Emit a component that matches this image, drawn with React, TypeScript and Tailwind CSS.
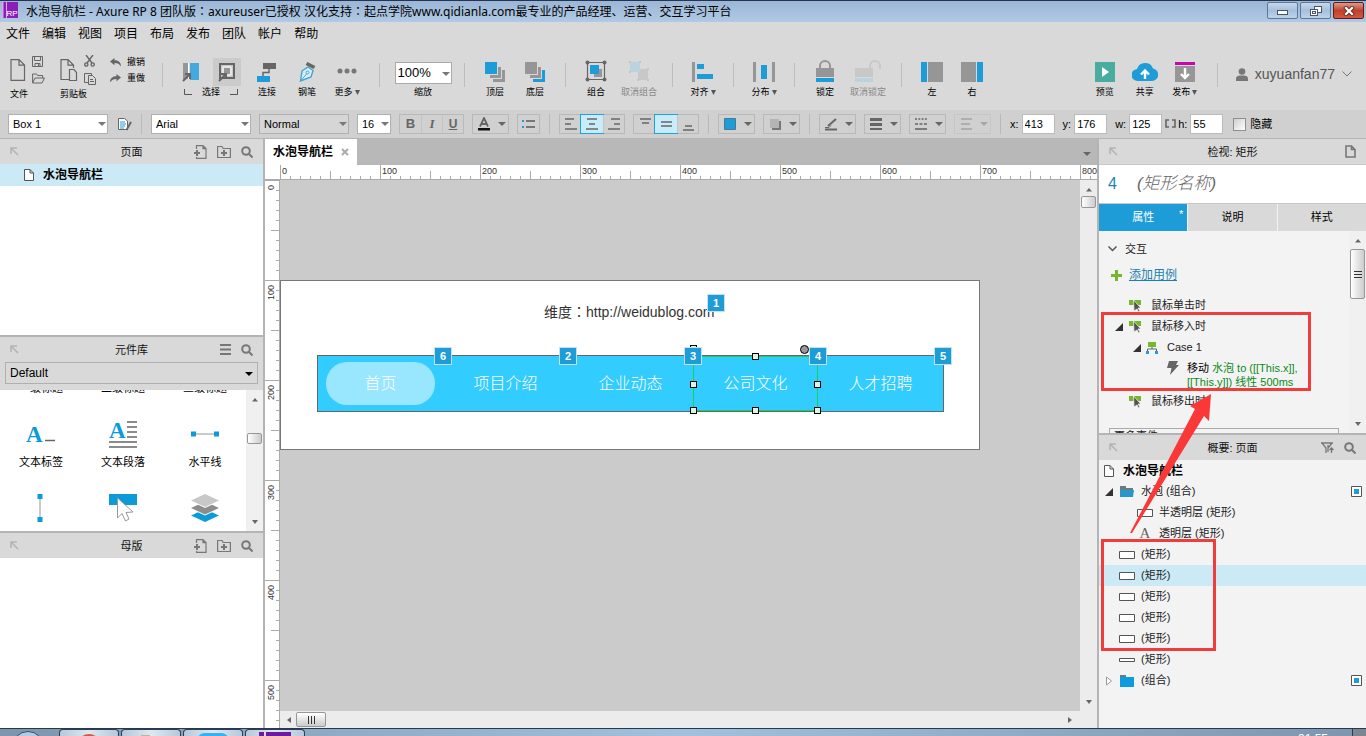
import { useState } from 'react';
import type { ReactNode } from 'react';
import clsx from 'clsx';

const FONT = 'font-["Liberation_Sans","Noto_Sans_CJK_SC",sans-serif]';

const menus = ['文件', '编辑', '视图', '项目', '布局', '发布', '团队', '帐户', '帮助'];

const BLUE = '#1e9cd7';
const GRAY = '#969696';
const DARK = '#666666';

/* ---------- shared icons ---------- */

function Caret({ className = 'text-[#666]' }: { className?: string }) {
  return (
    <svg viewBox="0 0 8 4" className={clsx('h-1 w-2 shrink-0', className)}>
      <path d="M0 0h8L4 4z" fill="currentColor" />
    </svg>
  );
}

function PageIcon({ className }: { className?: string }) {
  return (
    <svg viewBox="0 0 10 12" className={clsx('h-3 w-2.5 shrink-0', className)}>
      <path d="M.5.5h5.500l3.500 3.500v7.500h-9zM6 .5v3.500h3.500" fill="#fff" stroke="#555" />
    </svg>
  );
}

function CollapseIcon() {
  return (
    <svg viewBox="0 0 9 9" className="h-[9px] w-[9px]" fill="none" stroke="#b4b4b4" strokeWidth="1.6">
      <path d="M1 7V1h6M1 1l7 7" />
    </svg>
  );
}

function AddPageIcon() {
  return (
    <svg viewBox="0 0 14 14" className="h-3.5 w-3.5" fill="none" stroke="#777">
      <path d="M3.500 4V.6h6.500l3 3v9.800h-9.500V12M10 .6v3h3" strokeWidth="1.200" />
      <path d="M4 5v6M1 8h6" strokeWidth="2" />
    </svg>
  );
}

function AddFolderIcon() {
  return (
    <svg viewBox="0 0 14 14" className="h-3.5 w-3.5" fill="none" stroke="#777">
      <path d="M.6 12.500v-11h4.500l1 2h7.300v9z" strokeWidth="1.200" />
      <path d="M7 5v6M4 8h6" strokeWidth="2" />
    </svg>
  );
}

function SearchIcon() {
  return (
    <svg viewBox="0 0 12 12" className="h-3 w-3" fill="none" stroke="#777" strokeWidth="2">
      <circle cx="5" cy="5" r="3.800" />
      <path d="M8 8l3.500 3.500" />
    </svg>
  );
}

function MenuIcon() {
  return (
    <svg viewBox="0 0 11 11" className="h-[11px] w-[11px]" stroke="#777" strokeWidth="2">
      <path d="M0 1h11M0 5.500h11M0 10h11" />
    </svg>
  );
}

function FilterIcon() {
  return (
    <svg viewBox="0 0 13 12" className="h-3 w-[13px]" fill="none" stroke="#777" strokeWidth="1.300">
      <path d="M0 1h12M1 1l4 5v5M11 1L7.500 5.500M7 3v7" />
      <path d="M10.500 11V6M8.500 8l2-2 2 2" />
    </svg>
  );
}

/* ---------- title bar ---------- */

function TitleBar() {
  return (
    <header className="flex h-[22px] shrink-0 items-start border-t border-[#26344f] bg-gradient-to-b from-[#9bb6d6] to-[#b0c9e4] text-black">
      <svg viewBox="0 0 16 16" className="ml-0.5 mt-px h-4 w-4">
        <rect width="16" height="16" fill="#8a1fb8" />
        <path d="M0 0h1.500v16H0zM4 0h1v16H4z" fill="#d9a6ee" />
        <text x="4.500" y="14" fontSize="8" fill="#fff" fontFamily="Liberation Sans">RP</text>
      </svg>
      <h1 className={'ml-2 flex-1 text-xs leading-5 font-["Noto_Sans","Noto_Sans_CJK_SC",sans-serif]'}>
        水泡导航栏 - Axure RP 8 团队版<Colon />axureuser已授权 汉化支持<Colon />起点学院www.qidianla.com最专业的产品经理、运营、交互学习平台
      </h1>
      <div className="mr-0.5 mt-px flex gap-0.5">
        <button aria-label="最小化" className="flex h-[17px] w-[31px] items-center justify-center rounded-xs border border-[#5d7796] bg-gradient-to-b from-[#c6d8ec] via-[#a5bfdc] to-[#bdd3ea]">
          <svg viewBox="0 0 12 6" className="mt-1 h-1.5 w-3">
            <rect x=".5" y=".5" width="10" height="4" fill="#fff" stroke="#47566b" />
          </svg>
        </button>
        <button aria-label="还原" className="flex h-[17px] w-[31px] items-center justify-center rounded-xs border border-[#5d7796] bg-gradient-to-b from-[#c6d8ec] via-[#a5bfdc] to-[#bdd3ea]">
          <svg viewBox="0 0 12 12" className="h-3 w-3" fill="#fff" stroke="#47566b">
            <rect x="4.500" y="1.500" width="7" height="6" />
            <rect x=".5" y="4.500" width="7" height="6" />
            <rect x="2.500" y="6.500" width="3" height="2" />
          </svg>
        </button>
        <button aria-label="关闭" className="flex h-[17px] w-[31px] items-center justify-center rounded-xs border border-[#5b1f1b] bg-gradient-to-b from-[#dc9a8c] via-[#c23f2a] to-[#d4583e]">
          <svg viewBox="0 0 12 10" className="h-2.5 w-3" strokeLinecap="square">
            <path d="M3 2l6 6M9 2L3 8" stroke="#57302c" strokeWidth="4" />
            <path d="M3 2l6 6M9 2L3 8" stroke="#fff" strokeWidth="2.200" />
          </svg>
        </button>
      </div>
    </header>
  );
}

function Colon() {
  return <span className={'font-["Noto_Sans_CJK_TC",sans-serif]'}>：</span>;
}

/* ---------- main toolbar ---------- */

function Sep({ wide }: { wide?: boolean }) {
  return <div className={clsx('mb-1.5 h-6 w-px shrink-0 bg-[#bdbdbd]', wide ? 'mx-3' : 'mx-2.5')} />;
}

interface ToolProps {
  label: string;
  children: ReactNode;
  menu?: boolean;
  disabled?: boolean;
}

function Tool({ label, children, menu, disabled }: ToolProps) {
  return (
    <button
      disabled={disabled}
      className={clsx('flex shrink-0 flex-col items-center gap-1', disabled ? 'w-[46px] text-[#888]' : 'w-10 text-black')}
    >
      <span className="flex h-6 items-end">{children}</span>
      <span className="flex items-center gap-0.5 whitespace-nowrap text-[9px] leading-3">
        {label}
        {menu && (
          <svg viewBox="0 0 5 5" className="h-[5px] w-[5px]"><path d="M0 0h5L2.500 5z" fill="#555" /></svg>
        )}
      </span>
    </button>
  );
}

function Toolbar() {
  return (
    <div className="flex h-16 shrink-0 items-center bg-[#d9d9d9]">
      <div className="ml-2 flex w-[42px] flex-col gap-1">
        <div className="flex h-7 items-center gap-1.5">
          <button aria-label="新建文件">
            <svg viewBox="0 0 18 22" className="h-[22px] w-[18px]" fill="none" stroke={DARK} strokeWidth="1.200">
              <path d="M3 .6h8l5.500 5.500v15.300H3zM11 .6v5.500h5.500" />
            </svg>
          </button>
          <div className="flex flex-col gap-1.5">
            <button aria-label="保存">
              <svg viewBox="0 0 11 11" className="h-[11px] w-[11px]" fill="none" stroke={DARK}>
                <path d="M.5.5h10v10H.5zM2.500.5v4h6v-4M3 10.500v-3h5v3M6.500 8v2" />
              </svg>
            </button>
            <button aria-label="打开">
              <svg viewBox="0 0 13 11" className="h-[11px] w-[13px]" fill="none" stroke={DARK}>
                <path d="M.6 10V1h4l1 1.500h5V5M.6 10L3 5h9.500L10 10z" />
              </svg>
            </button>
          </div>
        </div>
        <span className="pl-0.5 text-[9px] leading-3">文件</span>
      </div>
      <div className="ml-2 flex w-11 flex-col gap-1">
        <div className="flex h-7 items-center gap-1.5">
          <button aria-label="粘贴">
            <svg viewBox="0 0 20 22" className="h-[22px] w-5" fill="none" stroke={DARK} strokeWidth="1.200">
              <path d="M11 20.500H3V.6h7l5.500 5.500V9M10 .6v5.500h5.500" />
              <path d="M11.500 10.500h4.500l2.500 3v8h-7z" />
            </svg>
          </button>
          <div className="flex flex-col gap-1.5">
            <button aria-label="剪切">
              <svg viewBox="0 0 11 12" className="h-3 w-[11px]" fill="none" stroke={DARK} strokeWidth="1.400">
                <path d="M2 0l6 8M9 0L3 8" />
                <circle cx="2.300" cy="9.500" r="1.600" />
                <circle cx="8.700" cy="9.500" r="1.600" />
              </svg>
            </button>
            <button aria-label="复制">
              <svg viewBox="0 0 12 12" className="h-3 w-3" fill="none" stroke={DARK}>
                <path d="M4.500 9.500h-4v-9h7v2M4.500 2.500h4l3 3v6h-7zM6 6.500h3M6 8.500h4" />
              </svg>
            </button>
          </div>
        </div>
        <span className="pl-0.5 text-[9px] leading-3">剪贴板</span>
      </div>
      <div className="mb-4 ml-2 flex w-[42px] flex-col gap-1">
        <button className="flex items-center gap-1.5 text-[9px] leading-3">
          <svg viewBox="0 0 11 9" className="h-[9px] w-[11px]"><path d="M0 3.500L4.500 0v2.300C8 2.300 11 4 11 8.500 9.500 6 7.500 5 4.500 5v2.300z" fill={DARK} /></svg>
          撤销
        </button>
        <button className="flex items-center gap-1.5 text-[9px] leading-3">
          <svg viewBox="0 0 11 9" className="h-[9px] w-[11px]"><path d="M11 3.500L6.500 0v2.300C3 2.300 0 4 0 8.500 1.500 6 3.500 5 6.500 5v2.300z" fill={DARK} /></svg>
          重做
        </button>
      </div>
      <Sep />
      <div className="ml-2 flex w-[60px] flex-col items-center">
        <div className="flex w-full justify-between">
          <button aria-label="相交选中">
            <svg viewBox="0 0 20 24" className="h-6 w-5">
              <path d="M2 3h6v16H2z" fill={GRAY} />
              <path d="M9 3h9v17H9z" fill="#44aadb" />
              <path d="M7 3h1v16H7z" fill="#fff" />
              <path d="M2 21l6-6M4 14h5v5" stroke={DARK} strokeWidth="2" fill="none" />
            </svg>
          </button>
          <button aria-label="包含选中" className="flex h-7 w-7 items-center justify-center bg-[#cbcbcb]">
            <svg viewBox="0 0 18 20" className="h-5 w-[18px]">
              <path d="M2 2h14v14H2z" fill="none" stroke={DARK} strokeWidth="2" />
              <path d="M5 5h8v8H5z" fill="none" stroke="#fff" strokeWidth="1" />
              <path d="M6 6h6v6H6z" fill={GRAY} />
              <path d="M1 19l6-6M3 12h5v5" stroke={DARK} strokeWidth="2" fill="none" />
            </svg>
          </button>
        </div>
        <div className="flex items-center gap-2.5 text-[9px] leading-3">
          <svg viewBox="0 0 8 6" className="h-1.5 w-2"><path d="M.5 0v5.500H8" fill="none" stroke="#555" /></svg>
          选择
          <svg viewBox="0 0 8 6" className="h-1.5 w-2"><path d="M7.500 0v5.500H0" fill="none" stroke="#555" /></svg>
        </div>
      </div>
      <div className="ml-1.5 flex items-center">
        <Tool label="连接">
          <svg viewBox="0 0 20 20" className="h-5 w-5">
            <path d="M6 1h13v6H6z" fill={DARK} />
            <path d="M0 14h13v6H0z" fill={BLUE} />
            <path d="M12 7v3.500H6V14" fill="none" stroke={DARK} strokeWidth="1.500" />
          </svg>
        </Tool>
        <Tool label="钢笔">
          <svg viewBox="0 0 18 20" className="h-5 w-[18px]">
            <path d="M2.500 19L4 9l6-4 5 3.500L13 15z" fill="#d9eef8" stroke="#44a5d3" strokeWidth="1.400" />
            <path d="M3 18.500l5.500-6.500" stroke="#44a5d3" />
            <circle cx="9.500" cy="10.500" r="1.500" fill="none" stroke="#44a5d3" />
            <path d="M8.500 1.500l8 4" stroke={DARK} strokeWidth="3.500" />
          </svg>
        </Tool>
        <Tool label="更多" menu>
          <svg viewBox="0 0 20 20" className="h-5 w-5" fill="#777">
            <circle cx="3" cy="9" r="2.500" />
            <circle cx="10" cy="9" r="2.500" />
            <circle cx="17" cy="9" r="2.500" />
          </svg>
        </Tool>
        <Sep wide />
        <div className="flex w-[62px] flex-col items-center gap-0.5">
          <div className="relative mt-1 flex w-[57px]">
            <select id="zoom" className="h-[22px] w-full appearance-none border border-[#aaa] bg-white pl-0.5 text-[13px] text-black">
              <option>100%</option>
            </select>
            <Caret className="pointer-events-none absolute right-0.5 top-2.5 text-[#777]" />
          </div>
          <label htmlFor="zoom" className="text-[9px] leading-3">缩放</label>
        </div>
        <Sep />
        <Tool label="顶层">
          <svg viewBox="0 0 20 20" className="h-5 w-5">
            <path d="M8 8h12v12H8z" fill={GRAY} />
            <path d="M4 4h13v13H4z" fill="#d9d9d9" />
            <path d="M5 5h11v11H5z" fill={GRAY} />
            <path d="M0 0h13v13H0z" fill="#d9d9d9" />
            <path d="M0 0h12v12H0z" fill={BLUE} />
          </svg>
        </Tool>
        <Tool label="底层">
          <svg viewBox="0 0 20 20" className="h-5 w-5">
            <path d="M8 8h12v12H8z" fill={BLUE} />
            <path d="M4 4h13v13H4z" fill="#d9d9d9" />
            <path d="M5 5h11v11H5z" fill={GRAY} />
            <path d="M0 0h13v13H0z" fill="#d9d9d9" />
            <path d="M0 0h12v12H0z" fill={GRAY} />
          </svg>
        </Tool>
        <Sep />
        <Tool label="组合">
          <svg viewBox="0 0 22 22" className="h-[22px] w-[22px]">
            <path d="M2.500 2.500h17v17h-17z" fill="none" stroke={DARK} strokeWidth="1.200" />
            <path d="M9 9h8v8H9z" fill={GRAY} />
            <path d="M5 5h9v9H5z" fill={BLUE} />
            <circle cx="2.500" cy="2.500" r="2" fill={DARK} />
            <circle cx="19.500" cy="2.500" r="2" fill={DARK} />
            <circle cx="2.500" cy="19.500" r="2" fill={DARK} />
            <circle cx="19.500" cy="19.500" r="2" fill={DARK} />
          </svg>
        </Tool>
        <Tool label="取消组合" disabled>
          <svg viewBox="0 0 22 22" className="h-[22px] w-[22px]">
            <path d="M10 9h10v11H10z" fill="#c8c8c8" />
            <path d="M2 2h10v10H2z" fill="#bcd3de" />
            <path d="M1 1h2v2H1zM11 1h2v2h-2zM1 11h2v2H1zM19 8h2v2h-2zM19 19h2v2h-2zM9 19h2v2H9z" fill="#c4c4c4" />
          </svg>
        </Tool>
        <Sep />
        <Tool label="对齐" menu>
          <svg viewBox="0 0 22 20" className="h-5 w-[22px]">
            <path d="M0 0h3v20H0z" fill={GRAY} />
            <path d="M5 2h7v5H5zM5 12h16v5H5z" fill={BLUE} />
          </svg>
        </Tool>
        <Sep />
        <Tool label="分布" menu>
          <svg viewBox="0 0 22 20" className="h-5 w-[22px]">
            <path d="M0 0h3v20H0zM19 0h3v20h-3z" fill={GRAY} />
            <path d="M8 3h6v14H8z" fill={BLUE} />
          </svg>
        </Tool>
        <Sep />
        <Tool label="锁定">
          <svg viewBox="0 0 18 22" className="h-[22px] w-[18px]">
            <path d="M4 9V6a5 5 0 0 1 10 0v3" fill="none" stroke={GRAY} strokeWidth="2" />
            <path d="M0 8h18v9H0z" fill={GRAY} />
            <path d="M0 18h18v4H0z" fill={BLUE} />
          </svg>
        </Tool>
        <Tool label="取消锁定" disabled>
          <svg viewBox="0 0 26 22" className="h-[22px] w-[26px]">
            <path d="M15 9V6a5 5 0 0 1 10 0v3" fill="none" stroke="#c8c8c8" strokeWidth="2" />
            <path d="M0 8h18v9H0z" fill="#c8c8c8" />
            <path d="M0 18h18v4H0z" fill="#bcd3de" />
          </svg>
        </Tool>
        <Sep />
        <Tool label="左">
          <svg viewBox="0 0 22 20" className="h-5 w-[22px]">
            <path d="M0 0h6v20H0z" fill={BLUE} />
            <path d="M7 0h15v20H7z" fill={GRAY} />
          </svg>
        </Tool>
        <Tool label="右">
          <svg viewBox="0 0 22 20" className="h-5 w-[22px]">
            <path d="M16 0h6v20h-6z" fill={BLUE} />
            <path d="M0 0h15v20H0z" fill={GRAY} />
          </svg>
        </Tool>
      </div>
      <div className="ml-auto flex items-center">
        <Tool label="预览">
          <svg viewBox="0 0 20 20" className="h-5 w-5">
            <path d="M0 0h20v20H0z" fill="#48ac9e" />
            <path d="M7 5l7 5-7 5z" fill="#fff" />
          </svg>
        </Tool>
        <Tool label="共享">
          <svg viewBox="0 0 26 20" className="h-5 w-[26px]">
            <path d="M6 19a6 6 0 0 1-1-12A8.500 8.500 0 0 1 21 6.500 6.300 6.300 0 0 1 20 19z" fill={BLUE} />
            <path d="M13 17V9M9 12.500l4-4 4 4" fill="none" stroke="#fff" strokeWidth="2.400" />
          </svg>
        </Tool>
        <Tool label="发布" menu>
          <svg viewBox="0 0 20 20" className="h-5 w-5">
            <path d="M0 0h20v3H0z" fill="#c30aa8" />
            <path d="M0 4h20v16H0z" fill={GRAY} />
            <path d="M10 6v9M6 12l4 4 4-4" fill="none" stroke="#fff" strokeWidth="2.400" />
          </svg>
        </Tool>
        <Sep wide />
        <button className="mb-2 mr-3.5 flex h-[30px] items-center gap-[7px] pl-1.5 text-sm text-[#555]">
          <svg viewBox="0 0 12 13" className="h-[13px] w-3" fill="#777">
            <circle cx="6" cy="3.500" r="3.300" />
            <path d="M0 13v-2.500C0 8.500 2 7.500 4 7.500h4c2 0 4 1 4 3V13z" />
          </svg>
          xuyuanfan77
          <svg viewBox="0 0 10 6" className="h-1.5 w-2.5" fill="none" stroke="#777"><path d="M.5.5L5 5 9.500.5" /></svg>
        </button>
      </div>
    </div>
  );
}

/* ---------- style bar ---------- */

interface BarSelectProps {
  label: string;
  value: string;
  className: string;
}

function BarSelect({ label, value, className }: BarSelectProps) {
  return (
    <div className={clsx('relative flex shrink-0', className)}>
      <select aria-label={label} className="h-5 w-full appearance-none border border-[#b0b0b0] bg-inherit pl-1 text-[11px] text-black">
        <option>{value}</option>
      </select>
      <Caret className="pointer-events-none absolute right-0.5 top-2 text-[#777]" />
    </div>
  );
}

function ButtonGroup({ items, active = -1 }: { items: { name: string; icon: ReactNode }[]; active?: number }) {
  return (
    <div className="flex shrink-0 border border-[#b9b9b9]">
      {items.map((it, i) => (
        <button
          key={it.name}
          aria-label={it.name}
          className={clsx(
            'flex h-[18px] items-center justify-center text-[#666]',
            i === active ? 'w-[22px] bg-[#c9ecfa] outline outline-[#22a0da]' : 'w-[21px]',
            i > 0 && i !== active && 'border-l border-[#c4c4c4]'
          )}
        >
          {it.icon}
        </button>
      ))}
    </div>
  );
}

function DropButton({ name, children, disabled }: { name: string; children: ReactNode; disabled?: boolean }) {
  return (
    <button
      aria-label={name}
      disabled={disabled}
      className="flex h-5 w-[37px] shrink-0 items-center justify-between border border-[#b9b9b9] pl-1 pr-0.5 disabled:opacity-40"
    >
      {children}
      <Caret />
    </button>
  );
}

function Lines({ d }: { d: string }) {
  return (
    <svg viewBox="0 0 14 14" className="h-3.5 w-3.5" fill="none" stroke="#666" strokeWidth="1.600">
      <path d={d} />
    </svg>
  );
}

function BarSep() {
  return <div className="mx-px h-5 w-px shrink-0 bg-[#b9b9b9]" />;
}

function NumberField({ label, value }: { label: string; value: string }) {
  return (
    <label className="flex shrink-0 items-center gap-[3px] text-[11px] text-black">
      {label}
      <input defaultValue={value} className="h-5 w-[33px] border border-[#bbb] bg-white pl-0.5 text-[11px]" />
    </label>
  );
}

function StyleBar() {
  return (
    <div className="flex h-[29px] shrink-0 items-center gap-2 border-b border-[#b4b4b4] bg-[#d0d0d0] pl-2">
      <BarSelect label="控件样式" value="Box 1" className="w-[100px] bg-white" />
      <button aria-label="样式管理" className="w-4 shrink-0">
        <svg viewBox="0 0 16 14" className="h-3.5 w-4" fill="none">
          <path d="M2.500 1.500h6l3 2.500v8.500h-9z" fill="#fff" stroke={DARK} />
          <path d="M4 5h5M4 7h6M4 9h5M4 11h4" stroke={BLUE} />
          <path d="M15 5l-4.500 8" stroke={DARK} strokeWidth="2" />
        </svg>
      </button>
      <BarSep />
      <BarSelect label="字体" value="Arial" className="w-[100px] bg-white" />
      <BarSelect label="字形" value="Normal" className="w-[90px] bg-[#d6d6d6]" />
      <BarSelect label="字号" value="16" className="w-[34px] bg-white" />
      <ButtonGroup
        items={[
          { name: '加粗', icon: <span className="text-[13px] font-bold leading-4">B</span> },
          { name: '斜体', icon: <span className={'text-[13px] font-bold italic leading-4 font-["Liberation_Serif",serif]'}>I</span> },
          { name: '下划线', icon: <span className="text-xs font-bold leading-4 underline">U</span> },
        ]}
      />
      <DropButton name="文字颜色">
        <svg viewBox="0 0 14 14" className="h-3.5 w-3.5">
          <path d="M3 9.500L7 1l4 8.500M4.500 7h5" fill="none" stroke={DARK} strokeWidth="1.800" />
          <path d="M1 11h12v2.500H1z" fill="#111" />
        </svg>
      </DropButton>
      <ButtonGroup
        items={[{
          name: '项目符号',
          icon: (
            <svg viewBox="0 0 14 10" className="h-2.5 w-3.5">
              <path d="M0 1h2v2H0zM0 7h2v2H0z" fill={BLUE} />
              <path d="M4 1h9v2H4zM4 7h9v2H4z" fill="#777" />
            </svg>
          ),
        }]}
      />
      <BarSep />
      <ButtonGroup
        active={1}
        items={[
          { name: '左对齐', icon: <Lines d="M1 2h9M1 7h6M1 12h12" /> },
          { name: '居中', icon: <Lines d="M2 2h10M4 7h6M1 12h12" /> },
          { name: '右对齐', icon: <Lines d="M4 2h9M7 7h6M1 12h12" /> },
        ]}
      />
      <ButtonGroup
        active={1}
        items={[
          { name: '顶部对齐', icon: <Lines d="M2 2h11M4 6h7" /> },
          { name: '垂直居中', icon: <Lines d="M2 5h11M2 9h11" /> },
          { name: '底部对齐', icon: <Lines d="M4 9h7M2 13h11" /> },
        ]}
      />
      <BarSep />
      <DropButton name="填充颜色">
        <svg viewBox="0 0 14 14" className="h-3.5 w-3.5"><path d="M1.500 1.500h11v11h-11z" fill={BLUE} stroke="#4a7890" /></svg>
      </DropButton>
      <DropButton name="外部阴影">
        <svg viewBox="0 0 14 14" className="h-3.5 w-3.5">
          <path d="M4 4h9v9H4z" fill="#777" />
          <path d="M2 2h9v9H2z" fill="#b4b4b4" />
        </svg>
      </DropButton>
      <BarSep />
      <DropButton name="线条颜色">
        <svg viewBox="0 0 14 14" className="h-3.5 w-3.5" fill="none" stroke={DARK}>
          <path d="M4 9l8-7" strokeWidth="2" />
          <path d="M1 10.500h4l2-2" />
          <path d="M1 12.500h12" strokeWidth="2" />
        </svg>
      </DropButton>
      <DropButton name="线宽">
        <svg viewBox="0 0 14 14" className="h-3.5 w-3.5" fill={DARK}><path d="M1 1h12v3H1zM1 6h12v3H1zM1 11h12v2H1z" /></svg>
      </DropButton>
      <DropButton name="线型">
        <svg viewBox="0 0 14 14" className="h-3.5 w-3.5" fill="none" stroke={DARK} strokeWidth="1.600">
          <path d="M1 2h12" strokeDasharray="2 1.300" />
          <path d="M1 7h12" strokeDasharray="3 1.500" />
          <path d="M1 12h12" />
        </svg>
      </DropButton>
      <DropButton name="箭头样式" disabled>
        <Lines d="M2 2h11M2 7h9M2 12h11" />
      </DropButton>
      <BarSep />
      <NumberField label="x:" value="413" />
      <NumberField label="y:" value="176" />
      <NumberField label="w:" value="125" />
      <div className="flex items-center">
        <button aria-label="保持宽高比例" className="-ml-1.5 w-3.5">
          <svg viewBox="0 0 14 10" className="h-2.5 w-3.5" fill="none" stroke={DARK} strokeWidth="1.600">
            <path d="M5 1H2v7h3M8 1h3v7H8" />
          </svg>
        </button>
        <NumberField label="h:" value="55" />
      </div>
      <label className="flex shrink-0 items-center gap-1 pl-0.5 text-[11px] text-black">
        <input type="checkbox" className="h-[13px] w-[13px] appearance-none border border-[#8e8f8f] bg-gradient-to-br from-[#cfcfcf] to-white" />
        隐藏
      </label>
    </div>
  );
}

/* ---------- side panels ---------- */

function PanelHeader({ title, children }: { title: string; children?: ReactNode }) {
  return (
    <div className="relative flex h-[25px] shrink-0 items-center justify-between bg-[#d9d9d9] px-2.5">
      <button aria-label="折叠"><CollapseIcon /></button>
      <h2 className="pointer-events-none absolute inset-x-0 text-center text-[11px] leading-4 text-[#111]">{title}</h2>
      <div className="flex items-center gap-2.5">{children}</div>
    </div>
  );
}

function ScrollArrow({ dir }: { dir: 'up' | 'down' | 'left' | 'right' }) {
  const paths = { up: 'M0 5.500h6L3 2z', down: 'M0 1h6L3 5z', left: 'M5 0v6L1 3z', right: 'M1 0v6l4-3z' };
  return (
    <svg viewBox="0 0 6 6" className="h-1.5 w-1.5 shrink-0"><path d={paths[dir]} fill="#666" /></svg>
  );
}

const widgets = [
  {
    label: '文本标签',
    icon: (
      <svg viewBox="0 0 30 28" className="h-7 w-[30px]">
        <text x="0" y="22" fontSize="23" fontWeight="bold" fontFamily="Liberation Serif" fill="#0a9bd8">A</text>
        <path d="M19 20.500h10" stroke={DARK} strokeWidth="1.500" />
      </svg>
    ),
  },
  {
    label: '文本段落',
    icon: (
      <svg viewBox="0 0 28 28" className="h-7 w-7">
        <text x="0" y="18" fontSize="23" fontWeight="bold" fontFamily="Liberation Serif" fill="#0a9bd8">A</text>
        <path d="M18 2h10M18 7h10M18 12h10M18 17h10M0 22h28M0 27h28" stroke={DARK} strokeWidth="1.600" />
      </svg>
    ),
  },
  {
    label: '水平线',
    icon: (
      <svg viewBox="0 0 28 28" className="h-7 w-7">
        <path d="M3 14h22" stroke={GRAY} />
        <path d="M0 11.500h5v5H0zM23 11.500h5v5h-5z" fill="#0a9bd8" />
      </svg>
    ),
  },
];

const moreWidgets = [
  {
    label: '垂直线',
    icon: (
      <svg viewBox="0 0 28 28" className="h-7 w-7">
        <path d="M13 3v22" stroke={GRAY} />
        <path d="M10.500 0h5v5h-5zM10.500 23h5v5h-5z" fill="#0a9bd8" />
      </svg>
    ),
  },
  {
    label: '热区',
    icon: (
      <svg viewBox="0 0 28 28" className="h-7 w-7">
        <path d="M0 0h28v11H0z" fill="#0a9bd8" />
        <path d="M8.500 4l15.500 14-7 .5 3 6.500-3.500 2-3.500-7.500-4.500 4.500z" fill="#fff" stroke="#999" />
      </svg>
    ),
  },
  {
    label: '动态面板',
    icon: (
      <svg viewBox="0 0 28 28" className="h-7 w-7">
        <path d="M0 21.500L14 15l14 6.500L14 28z" fill="#0a9bd8" />
        <path d="M0 15l14-6.500L28 15l-14 6.500z" fill="#fff" />
        <path d="M0 14l14-6.500L28 14l-14 6.500z" fill="#8c8c8c" />
        <path d="M0 7.500L14 1l14 6.500L14 14z" fill="#fff" />
        <path d="M0 6.500L14 0l14 6.500L14 13z" fill="#c8c8c8" />
      </svg>
    ),
  },
];

function LeftColumn() {
  return (
    <aside className="flex w-[265px] shrink-0 flex-col border-r-2 border-[#b4b4b4] bg-white">
      <section className="flex h-[198px] flex-col border-b-2 border-[#b4b4b4]">
        <PanelHeader title="页面">
          <button aria-label="添加页面"><AddPageIcon /></button>
          <button aria-label="添加文件夹"><AddFolderIcon /></button>
          <button aria-label="查找"><SearchIcon /></button>
        </PanelHeader>
        <div className="flex h-[22px] items-center gap-[9px] bg-[#cbeaf6] pl-6 text-xs font-bold text-black">
          <PageIcon />
          水泡导航栏
        </div>
      </section>
      <section className="flex h-[196px] flex-col border-b-2 border-[#b4b4b4]">
        <PanelHeader title="元件库">
          <button aria-label="选项"><MenuIcon /></button>
          <button aria-label="查找"><SearchIcon /></button>
        </PanelHeader>
        <div className="relative h-7 shrink-0 bg-[#d9d9d9] px-[5px]">
          <select aria-label="元件库选择" className="block h-[22px] w-full appearance-none border border-[#b0b0b0] pl-1 text-xs text-black">
            <option>Default</option>
          </select>
          <Caret className="pointer-events-none absolute right-2.5 top-2.5 text-black" />
        </div>
        <div className="flex min-h-0 flex-1">
          <div className="flex flex-1 flex-col overflow-hidden text-[11px] leading-4 text-black">
            <div className="flex h-4 shrink-0 items-end">
              {['一级标题', '二级标题', '三级标题'].map((t) => (
                <span key={t} className="flex h-[26px] w-[82px] shrink-0 justify-center">{t}</span>
              ))}
            </div>
            <div className="grid grid-cols-[82px_82px_82px] pt-3.5">
              {widgets.map((w) => (
                <button key={w.label} className="flex flex-col items-center gap-1.5">
                  {w.icon}
                  <span>{w.label}</span>
                </button>
              ))}
            </div>
            <div className="grid grid-cols-[82px_82px_82px] pt-6">
              {moreWidgets.map((w) => (
                <button key={w.label} aria-label={w.label} className="flex justify-center">{w.icon}</button>
              ))}
            </div>
          </div>
          <div className="flex w-[17px] flex-col items-center justify-between bg-[#f0f0f0] py-1.5">
            <ScrollArrow dir="up" />
            <div className="mb-11 h-[11px] w-[15px] rounded-xs border border-[#979797] bg-gradient-to-r from-white to-[#ccc]" />
            <ScrollArrow dir="down" />
          </div>
        </div>
      </section>
      <section className="flex-1">
        <PanelHeader title="母版">
          <button aria-label="添加母版"><AddPageIcon /></button>
          <button aria-label="添加文件夹"><AddFolderIcon /></button>
          <button aria-label="查找"><SearchIcon /></button>
        </PanelHeader>
      </section>
    </aside>
  );
}

/* ---------- design area ---------- */

const navItems = [
  { label: '首页', badge: 6 },
  { label: '项目介绍', badge: 2 },
  { label: '企业动态', badge: 3 },
  { label: '公司文化', badge: 4 },
  { label: '人才招聘', badge: 5 },
];

function Badge({ children, className }: { children: ReactNode; className: string }) {
  return (
    <span className={clsx('absolute z-20 flex h-[18px] w-[18px] items-center justify-center border border-[#bfe3f4] bg-[#1e9cd7] text-[11px] font-bold leading-none text-white', className)}>
      {children}
    </span>
  );
}

function Handle({ className }: { className: string }) {
  return <span className={clsx('absolute z-10 h-[7px] w-[7px] border border-black bg-[#d9f5e4]', className)} />;
}

function Selection() {
  return (
    <span className="absolute inset-0 z-10 border border-[#14d25c]">
      <Handle className="-left-1 -top-3" />
      <Handle className="-top-1 left-[58px]" />
      <Handle className="-left-1 top-6" />
      <Handle className="-right-1 top-6" />
      <Handle className="-bottom-1 -left-1" />
      <Handle className="-bottom-1 left-[58px]" />
      <Handle className="-bottom-1 -right-1" />
      <span className="absolute -top-3 right-2 h-[9px] w-[9px] rounded-full border border-black bg-[#999]" />
    </span>
  );
}

function HorizontalRuler() {
  return (
    <div className="flex h-[15px] overflow-hidden border-b border-[#aaa] bg-white pl-[15px]">
      {Array.from({ length: 9 }, (_, i) => (
        <div key={i} className="relative w-[100px] shrink-0 border-l border-[#aaa]">
          <svg viewBox="0 0 100 14" className="absolute -left-px top-0 h-3.5 w-[100px]" stroke="#aaa">
            <path d="M10.500 11v3M20.500 11v3M30.500 11v3M40.500 11v3M50.500 6v8M60.500 11v3M70.500 11v3M80.500 11v3M90.500 11v3" />
          </svg>
          <span className="relative block w-4 pl-px text-[9px] leading-3 text-[#333]">{i * 100}</span>
        </div>
      ))}
    </div>
  );
}

function VerticalRuler() {
  return (
    <div className="w-[15px] shrink-0 overflow-hidden border-r border-[#aaa] bg-white">
      {Array.from({ length: 6 }, (_, i) => (
        <div key={i} className="relative h-[100px] border-t border-[#aaa]">
          <svg viewBox="0 0 14 100" className="absolute -top-px left-0 h-[100px] w-3.5" stroke="#aaa">
            <path d="M11 10.500h3M11 20.500h3M11 30.500h3M11 40.500h3M6 50.500h8M11 60.500h3M11 70.500h3M11 80.500h3M11 90.500h3" />
          </svg>
          <span className="relative block rotate-180 pb-1 text-[9px] leading-3 text-[#333] [writing-mode:vertical-rl]">{i * 100}</span>
        </div>
      ))}
    </div>
  );
}

function DesignArea() {
  return (
    <main className="flex min-w-0 flex-1 flex-col bg-[#cbcbcb]">
      <div className="flex h-[26px] shrink-0 items-center justify-between bg-[#b8b8b8] pr-1.5">
        <div className="flex h-full items-center gap-2 bg-white px-2 text-xs font-bold text-black">
          水泡导航栏
          <button aria-label="关闭标签">
            <svg viewBox="0 0 8 8" className="h-2 w-2" stroke="#aaa" strokeWidth="2"><path d="M1 1l6 6M7 1L1 7" /></svg>
          </button>
        </div>
        <button aria-label="标签列表" className="pt-1"><Caret /></button>
      </div>
      <HorizontalRuler />
      <div className="flex min-h-0 flex-1">
        <VerticalRuler />
        <div className="flex min-w-0 flex-1 flex-col">
          <div className="flex min-h-0 flex-1">
            <div className="relative min-w-0 flex-1 overflow-hidden">
              <div className="absolute left-0 top-[100px] h-[170px] w-[700px] border border-[#777] bg-white">
                <p className="absolute left-[263px] top-5 whitespace-nowrap text-sm leading-5 text-[#333]">
                  维度<Colon />http://weidublog.com
                </p>
                <Badge className="left-[426px] top-[13px]">1</Badge>
                <nav className="absolute left-9 top-[74px] flex h-[57px] border border-[#666] bg-[#33ccff] text-base font-light text-white">
                  {navItems.map((n) => (
                    <a key={n.label} href="#" className="relative flex w-[125px] items-center justify-center">
                      {n.badge === 6 && <span className="absolute inset-x-2 inset-y-1.5 rounded-[21px] bg-white/50" />}
                      <span className="relative">{n.label}</span>
                      {n.badge === 4 && <Selection />}
                      <Badge className="-right-[9px] -top-[9px]">{n.badge}</Badge>
                    </a>
                  ))}
                </nav>
              </div>
            </div>
            <div className="flex w-[17px] flex-col items-center justify-between bg-[#ececec] py-1.5">
              <div className="flex flex-col items-center gap-1">
                <ScrollArrow dir="up" />
                <div className="h-3 w-[15px] rounded-xs border border-[#979797] bg-gradient-to-r from-white to-[#ccc]" />
              </div>
              <ScrollArrow dir="down" />
            </div>
          </div>
          <div className="flex h-[17px] shrink-0 items-center bg-[#ececec] pl-1.5 pr-6">
            <ScrollArrow dir="left" />
            <div className="ml-1 flex h-[15px] w-[30px] items-center justify-center gap-0.5 rounded-xs border border-[#979797] bg-gradient-to-b from-white to-[#ccc]">
              <i className="h-2 w-px bg-[#333]" />
              <i className="h-2 w-px bg-[#333]" />
              <i className="h-2 w-px bg-[#333]" />
            </div>
            <span className="flex-1" />
            <ScrollArrow dir="right" />
          </div>
        </div>
      </div>
    </main>
  );
}

/* ---------- inspector ---------- */

function EventIcon() {
  return (
    <svg viewBox="0 0 12 12" className="h-3 w-3 shrink-0">
      <path d="M0 0h12v5H0z" fill="#76b82a" />
      <path d="M4.500 0L12 8H9l2 3-1.500 1L8 9l-3 2z" fill="#555" stroke="#f3f3f3" strokeWidth=".8" />
    </svg>
  );
}

function OpenTriangle({ className }: { className?: string }) {
  return (
    <svg viewBox="0 0 8 8" className={clsx('h-2 w-2 shrink-0', className)}><path d="M8 0v8H0z" fill="#333" /></svg>
  );
}

function RectIcon({ thin }: { thin?: boolean }) {
  return (
    <svg viewBox="0 0 16 8" className="h-2 w-4 shrink-0">
      {thin ? (
        <path d="M.5 2.500h15v3H.5z" fill="#fff" stroke="#555" />
      ) : (
        <path d="M.5.5h15v7H.5z" fill="#fff" stroke="#555" />
      )}
    </svg>
  );
}

function FolderIcon({ open }: { open?: boolean }) {
  return (
    <svg viewBox="0 0 14 12" className="h-3 w-3.5 shrink-0">
      <path d="M0 0h6v2h7v5H0z" fill="#6a7a82" />
      {open ? <path d="M0 11V5l1-1h13l-1 7z" fill="#2a96c8" /> : <path d="M0 2h14v10H0z" fill="#0a9be0" />}
    </svg>
  );
}

function GroupMark() {
  return (
    <svg viewBox="0 0 11 11" className="ml-auto h-[11px] w-[11px] shrink-0">
      <path d="M.5.5h10v10H.5z" fill="#fff" stroke="#555" />
      <path d="M3 3h5v5H3z" fill={BLUE} />
    </svg>
  );
}

function Inspector() {
  const [tab, setTab] = useState('属性');
  return (
    <section className="flex h-[296px] shrink-0 flex-col border-b-2 border-[#b4b4b4]">
      <PanelHeader title="检视: 矩形">
        <button aria-label="页面属性">
          <svg viewBox="0 0 11 13" className="h-[13px] w-[11px]" fill="none" stroke="#777" strokeWidth="1.600">
            <path d="M1 1h5.500L10 4.500V12H1zM6.500 1v3.500H10" />
          </svg>
        </button>
      </PanelHeader>
      <div className="flex h-10 shrink-0 items-center gap-5 border-y border-[#c8c8c8] bg-white pl-[9px]">
        <span className="text-base text-[#1a86b0]">4</span>
        <input aria-label="矩形名称" placeholder="(矩形名称)" className="w-40 text-[17px] italic placeholder:font-light placeholder:text-[#666]" />
      </div>
      <div className="flex h-[27px] shrink-0 gap-px bg-[#f3f3f3]">
        {['属性', '说明', '样式'].map((t) => (
          <button
            key={t}
            onClick={() => setTab(t)}
            className={clsx('relative flex-1 text-[11px]', tab === t ? 'bg-[#1e9cd7] text-white' : 'bg-[#d9d9d9] text-black')}
          >
            {t}
            {t === '属性' && <sup className="absolute right-1 top-2.5 text-[11px]">*</sup>}
          </button>
        ))}
      </div>
      <div className="flex min-h-0 flex-1 bg-[#f3f3f3]">
        <div className="min-w-0 flex-1 overflow-hidden pt-2 text-[11px] leading-[14px] text-[#222]">
          <div className="flex h-5 items-center gap-2 pl-[9px]">
            <svg viewBox="0 0 9 6" className="h-1.5 w-[9px]" fill="none" stroke="#555" strokeWidth="1.500"><path d="M.5.5l4 4 4-4" /></svg>
            交互
          </div>
          <div className="flex h-8 items-center gap-[7px] pl-3">
            <svg viewBox="0 0 11 11" className="h-[11px] w-[11px]" stroke="#76b82a" strokeWidth="3"><path d="M5.500 0v11M0 5.500h11" /></svg>
            <a href="#" className="text-xs text-[#1a80ae] underline">添加用例</a>
          </div>
          <div className="flex h-[21px] items-end gap-2.5 pl-[30px]"><EventIcon />鼠标单击时</div>
          <div className="flex h-[21px] items-end pl-4">
            <OpenTriangle className="mb-0.5" />
            <span className="flex items-end gap-2.5 pl-1.5"><EventIcon />鼠标移入时</span>
          </div>
          <div className="flex h-[21px] items-end gap-[5px] pl-[34px]">
            <OpenTriangle className="mb-0.5" />
            <svg viewBox="0 0 12 12" className="h-3 w-3" fill="none">
              <path d="M2 0h8v5H2z" fill="#76b82a" />
              <path d="M6 5v2M1.500 10V7h9v3" stroke={DARK} />
              <path d="M0 9h3v3H0zM9 9h3v3H9z" fill={BLUE} />
            </svg>
            <span className="pl-1">Case 1</span>
          </div>
          <div className="flex items-start gap-2 pl-[68px] pt-[7px]">
            <svg viewBox="0 0 12 14" className="h-3.5 w-3 shrink-0"><path d="M2 0h9L9 4h3L3 14l1.500-7H0z" fill={DARK} /></svg>
            <p className="whitespace-nowrap text-[#0a8a1a]">
              <span className="text-black">移动</span> 水泡 to ([[This.x]],<br />[[This.y]]) 线性 500ms
            </p>
          </div>
          <div className="flex h-[19px] items-end gap-2.5 pl-[30px]"><EventIcon />鼠标移出时</div>
          <div className="mt-5 px-2.5">
            <select aria-label="更多事件" className="block h-4 w-full appearance-none border border-[#aaa] pl-1 text-[11px] leading-3"><option>更多事件</option></select>
          </div>
        </div>
        <div className="flex w-[17px] flex-col items-center justify-between bg-[#f0f0f0] py-1.5">
          <div className="flex flex-col items-center gap-1.5">
            <ScrollArrow dir="up" />
            <div className="flex h-[50px] w-[15px] flex-col items-center justify-center gap-0.5 rounded-xs border border-[#979797] bg-gradient-to-r from-white to-[#ccc]">
              <i className="h-px w-2 bg-[#333]" />
              <i className="h-px w-2 bg-[#333]" />
              <i className="h-px w-2 bg-[#333]" />
            </div>
          </div>
          <ScrollArrow dir="down" />
        </div>
      </div>
    </section>
  );
}

function Outline() {
  const row = 'flex h-[21px] items-center pr-1';
  return (
    <section className="flex-1 bg-[#f3f3f3] text-[11px] text-[#222]">
      <PanelHeader title="概要: 页面">
        <button aria-label="排序与筛选"><FilterIcon /></button>
        <button aria-label="查找"><SearchIcon /></button>
      </PanelHeader>
      <ul>
        <li className={clsx(row, 'gap-[9px] pl-[5px] text-xs font-bold text-black')}><PageIcon />水泡导航栏</li>
        <li className={clsx(row, 'gap-[7px] pl-1.5')}><OpenTriangle /><FolderIcon open />水泡 (组合)<GroupMark /></li>
        <li className={clsx(row, 'gap-1.5 pl-[38px]')}><RectIcon />半透明层 (矩形)</li>
        <li className={clsx(row, 'gap-1.5 pl-[38px]')}>
          <span className={'w-4 text-center text-[15px] text-[#666] font-["Liberation_Serif",serif]'}>A</span>透明层 (矩形)
        </li>
        {[0, 1, 2, 3, 4, 5].map((i) => (
          <li key={i} className={clsx(row, 'gap-1.5 pl-5', i === 1 && 'bg-[#cbeaf6]')}><RectIcon thin={i === 5} />(矩形)</li>
        ))}
        <li className={clsx(row, 'gap-[7px] pl-1.5')}>
          <svg viewBox="0 0 8 10" className="h-2.5 w-2 shrink-0"><path d="M1.500 1l5 4-5 4z" fill="#fff" stroke="#999" /></svg>
          <FolderIcon />(组合)<GroupMark />
        </li>
      </ul>
    </section>
  );
}

// red callouts drawn over both right-hand panels
function Annotations() {
  return (
    <div className="pointer-events-none absolute inset-0 z-30">
      <div className="absolute left-0.5 top-[173px] h-[79px] w-[210px] border-[3px] border-[#f23c3c]" />
      <div className="absolute left-0.5 top-[400px] h-28 w-[115px] border-[3px] border-[#f23c3c]" />
      <svg viewBox="0 0 90 144" className="absolute left-[30px] top-[255px] h-36 w-[90px]">
        <path d="M1 139L66 15 61 12 82 0 80 27 75 22 3 139z" fill="#fa3838" />
      </svg>
    </div>
  );
}

/* ---------- taskbar ---------- */

function Taskbar() {
  const task = 'flex h-2 w-[60px] justify-center overflow-hidden rounded-t-sm border-x border-t border-[#2c3e55] bg-gradient-to-r from-[#b7c8da] via-[#dfe8f0] to-[#b7c8da]';
  return (
    <footer className="flex h-2 shrink-0 items-start overflow-hidden border-t border-[#243a54] bg-gradient-to-r from-[#7f95ae] via-[#a3c0dc] to-[#7f95ae]">
      <button aria-label="开始" className="ml-3 mt-0.5 h-8 w-8 shrink-0 rounded-full border border-[#34506e] bg-[#b4cbe0]" />
      <div className="flex gap-0.5 pl-[15px]">
        <button aria-label="Chrome" className={task}>
          <svg viewBox="0 0 24 8" className="mt-1 h-2 w-6"><circle cx="12" cy="12" r="12" fill="#d4574a" /></svg>
        </button>
        <button aria-label="资源管理器" className={task}>
          <svg viewBox="0 0 24 8" className="mt-1 h-2 w-6"><path d="M2 1h9v7H2z" fill="#c9b48e" /></svg>
        </button>
        <button aria-label="云盘" className={task}>
          <svg viewBox="0 0 32 8" className="mt-0.5 h-2 w-8"><path d="M0 8c1-5 4-7 8-7h16c4 0 7 2 8 7z" fill="#35b1f5" /></svg>
        </button>
        <button aria-label="Axure RP" className={task}>
          <svg viewBox="0 0 32 8" className="mt-0.5 h-2 w-8"><path d="M0 0h32v8H0z" fill="#6d1aa0" /><path d="M5 0h2v8H5z" fill="#e9d3f5" /></svg>
        </button>
      </div>
      <time className="ml-auto mr-6 mt-0.5 text-xs text-white">21:55</time>
      <button aria-label="显示桌面" className="h-2 w-3.5 border-l border-[#2c3e55] bg-[#7c8590]" />
    </footer>
  );
}

export default function App() {
  return (
    <div className={clsx('flex h-screen flex-col overflow-hidden bg-[#d9d9d9]', FONT)}>
      <TitleBar />
      <nav className="flex h-6 shrink-0 items-center gap-3 bg-[#d9d9d9] pl-1.5 text-xs text-black">
        {menus.map((m) => (
          <button key={m}>{m}</button>
        ))}
      </nav>
      <Toolbar />
      <StyleBar />
      <div className="flex min-h-0 flex-1">
        <LeftColumn />
        <DesignArea />
        <aside className="relative flex w-[269px] shrink-0 flex-col border-l-2 border-[#b4b4b4]">
          <Inspector />
          <Outline />
          <Annotations />
        </aside>
      </div>
      <Taskbar />
    </div>
  );
}
